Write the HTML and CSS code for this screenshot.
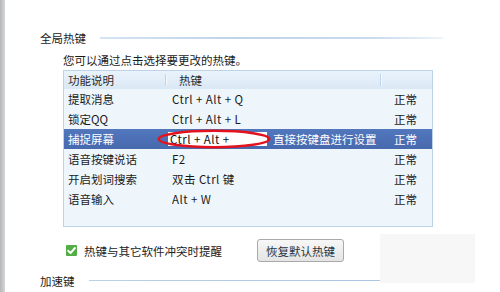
FILE: index.html
```html
<!DOCTYPE html>
<html lang="zh-CN">
<head>
<meta charset="utf-8">
<link rel="stylesheet" href="styles.css">
</head>
<body>
<div class="window">
  <div class="edge"></div>
  <div class="main">
    <div class="section-title"><span>全局热键</span><i class="rule"></i></div>
    <p class="hint">您可以通过点击选择要更改的热键。</p>
    <div class="table">
      <div class="row head">
        <div class="c1">功能说明</div>
        <div class="c2">热键</div>
        <div class="c3"></div>
      </div>
      <div class="row"><div class="c1">提取消息</div><div class="c2 keys">Ctrl + Alt + Q</div><div class="c3">正常</div></div>
      <div class="row"><div class="c1">锁定QQ</div><div class="c2 keys">Ctrl + Alt + L</div><div class="c3">正常</div></div>
      <div class="row selected">
        <div class="c1">捕捉屏幕</div>
        <div class="c2 edit">
          <span class="input keys">Ctrl + Alt + </span>
          <span class="tip">直接按键盘进行设置</span>
          <svg class="circle" width="114" height="20" viewBox="0 0 114 20"><ellipse cx="57" cy="10" rx="55.3" ry="8.2" fill="none" stroke="#e3121c" stroke-width="2.4"/></svg>
        </div>
        <div class="c3">正常</div>
      </div>
      <div class="row"><div class="c1">语音按键说话</div><div class="c2 keys">F2</div><div class="c3">正常</div></div>
      <div class="row"><div class="c1">开启划词搜索</div><div class="c2 keys">双击 Ctrl 键</div><div class="c3">正常</div></div>
      <div class="row"><div class="c1">语音输入</div><div class="c2 keys">Alt + W</div><div class="c3">正常</div></div>
    </div>
    <div class="options">
      <span class="check"><svg width="11" height="11" viewBox="0 0 11 11"><path d="M2.2 5.8 L4.5 8.1 L8.9 3" fill="none" stroke="#fff" stroke-width="2" stroke-linecap="round" stroke-linejoin="round"/></svg></span>
      <span class="check-label">热键与其它软件冲突时提醒</span>
      <button class="btn">恢复默认热键</button>
    </div>
    <div class="section-title accel"><span>加速键</span><i class="rule"></i></div>
  </div>
  <div class="shade"></div>
</div>
</body>
</html>
```
FILE: styles.css
```css
html, body {
  margin: 0;
  padding: 0;
  background: #fff;
}
body {
  width: 500px;
  height: 292px;
  overflow: hidden;
  font-family: "Noto Sans CJK SC", "Noto Sans", sans-serif;
  font-size: 11.5px;
  color: #1b1b1b;
}
.window {
  position: relative;
  display: flex;
  width: 500px;
  height: 292px;
}
.edge {
  width: 5px;
  flex: none;
  background: linear-gradient(to right, #b4b6b8, #d4d6d8);
}
.main {
  flex: 1;
  padding: 30px 57px 0 35px;
}
.section-title {
  display: flex;
  align-items: center;
  height: 16px;
  line-height: 16px;
}
.section-title .rule {
  flex: 1;
  height: 2px;
  margin-left: 14px;
  margin-top: -1px;
  background: linear-gradient(to right, #d5e3f2, #bed4ea 40%, #c9dbee 80%, #eef4fa);
}
.hint {
  margin: 6px 0 0 23px;
  line-height: 16px;
}
.table {
  box-sizing: border-box;
  width: 370px;
  height: 157px;
  margin: 2px 0 0 23px;
  border: 1px solid #bcd3e9;
  background: #eef6fc;
}
.row {
  display: grid;
  grid-template-columns: 102px 215px 1fr;
  height: 20px;
  line-height: 20px;
}
.row > div {
  position: relative;
  white-space: nowrap;
}
.c1 { padding-left: 4px; }
.c2 { padding-left: 6px; }
.c3 { padding-left: 13px; }
.keys { letter-spacing: 0.45px; }
.head {
  height: 18px;
  line-height: 18px;
  background: linear-gradient(to bottom, #eaf3fb, #d9e8f5);
  color: #2a2a2a;
}
.head .c2 { padding-left: 13px; }
.head .c2::before,
.head .c3::before {
  content: "";
  position: absolute;
  left: -1px;
  top: 3px;
  bottom: 3px;
  width: 1px;
  background: #bfd3e8;
  box-shadow: 1px 0 0 #f5f9fd;
}
.selected {
  background: linear-gradient(to bottom, #5277bd, #4769ae);
  color: #fff;
}
.edit {
  display: flex;
  align-items: center;
  padding-left: 2px;
}
.input {
  box-sizing: border-box;
  width: 99px;
  height: 14px;
  line-height: 14px;
  padding-left: 2px;
  background: #fff;
  color: #111;
}
.tip {
  margin-left: 6px;
}
.circle {
  position: absolute;
  left: -9px;
  top: 0;
}
.options {
  display: flex;
  align-items: center;
  height: 23px;
  margin: 12px 0 0 26px;
}
.check {
  width: 11px;
  height: 11px;
  flex: none;
  background: #52ad45;
  border-radius: 1px;
  display: flex;
}
.check-label {
  margin-left: 7px;
  color: #222;
}
.btn {
  box-sizing: border-box;
  width: 87px;
  height: 23px;
  margin-left: 35px;
  padding: 0;
  border: 1px solid #a9a9a9;
  border-radius: 3px;
  background: linear-gradient(to bottom, #f7f7f7, #e4e4e4);
  font-family: "Noto Sans CJK SC", "Noto Sans", sans-serif;
  font-size: 11.5px;
  color: #27333f;
}
.accel {
  margin-top: 11px;
}
.accel .rule {
  margin-left: 14px;
  height: 1px;
  background: linear-gradient(to right, #b9d0e8, #a9c5e3);
}
.shade {
  position: absolute;
  left: 380px;
  top: 234px;
  width: 95px;
  height: 49px;
  background: #f7f7f7;
}
```
